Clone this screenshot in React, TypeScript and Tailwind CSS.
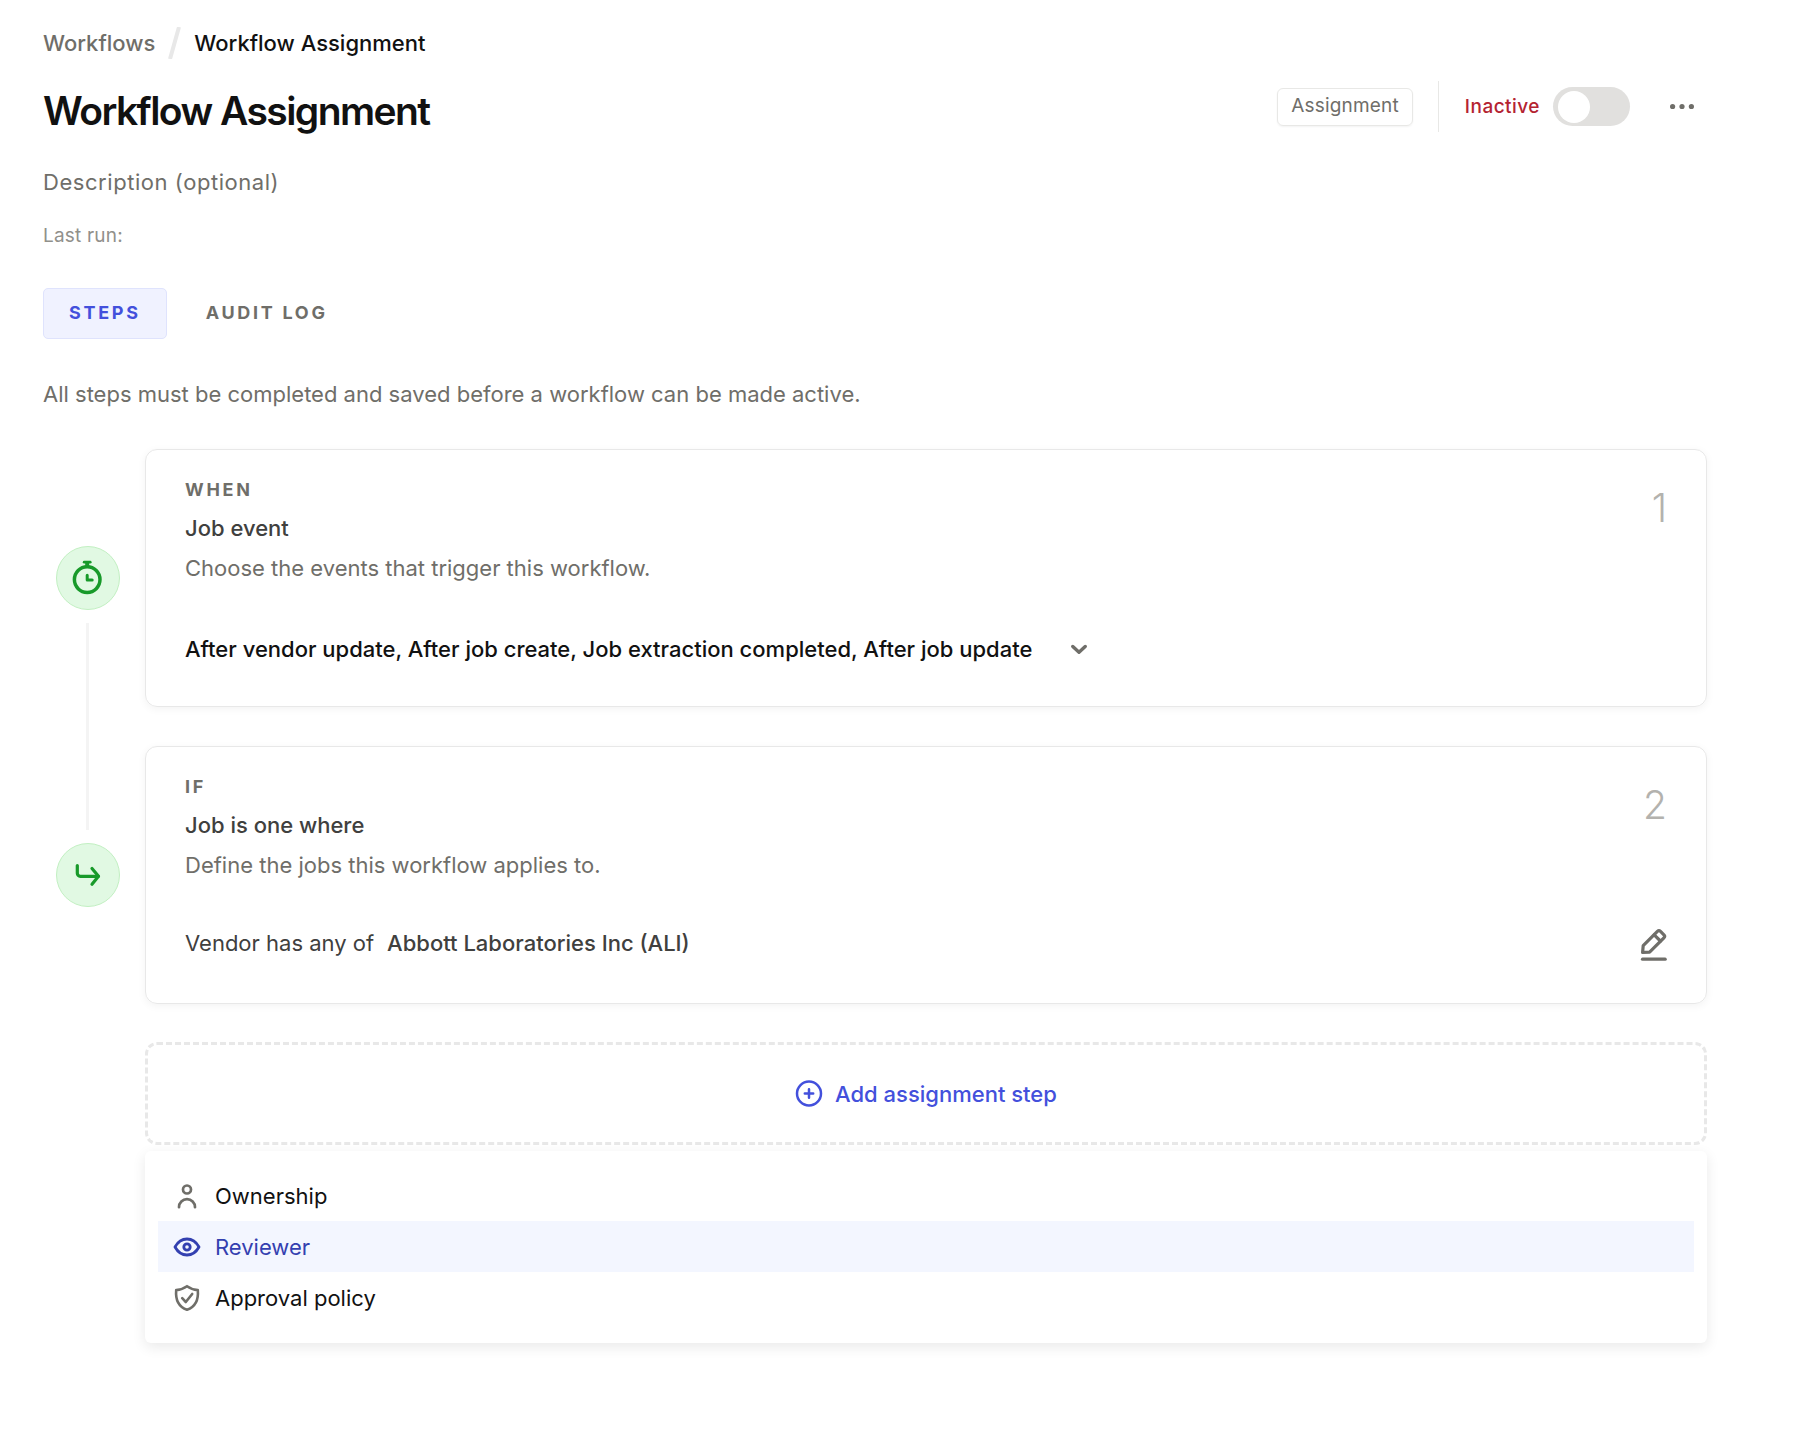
import type { ReactNode } from 'react';

// Icons
function StopwatchIcon() {
  return (
    <svg className="h-9 w-9" viewBox="0 0 36 36" fill="none" stroke="currentColor" strokeLinecap="round" strokeLinejoin="round">
      <circle cx="17.2" cy="19.600" r="12.800" strokeWidth="3.500" />
      <path d="M17.200 15.200v4.900h5" strokeWidth="3" />
      <path d="M14.200 2.200h6" strokeWidth="2.800" />
      <path d="M17.200 3v4" strokeWidth="4" strokeLinecap="butt" />
    </svg>
  );
}

function BranchIcon() {
  return (
    <svg className="h-9 w-9" viewBox="0 0 36 36" fill="none" stroke="currentColor" strokeWidth="3.200" strokeLinecap="round" strokeLinejoin="round">
      <path d="M7.300 8.500v7.800a3 3 0 0 0 3 3h18" />
      <path d="M22 11.500l6.500 7.800l-6.500 7.900" />
    </svg>
  );
}

function ChevronIcon() {
  return (
    <svg className="h-4 w-4" viewBox="0 0 16 16" fill="none" stroke="currentColor" strokeWidth="3.400" strokeLinecap="round" strokeLinejoin="round">
      <path d="M1.800 5.500L8 11.200l6.200-5.700" />
    </svg>
  );
}

function PencilIcon() {
  return (
    <svg className="h-9 w-7" viewBox="3 -1 28 36" fill="none" stroke="currentColor" strokeWidth="3.200" strokeLinecap="round" strokeLinejoin="round">
      <path d="M6.600 26.400l.6-6.800L21.400 5.400a2.200 2.200 0 0 1 3.100 0l3.400 3.400a2.200 2.200 0 0 1 0 3.100L13.600 26.100z" />
      <path d="M18.200 8.800l6.200 6.200" />
      <path d="M6.500 33.200h22.700" />
    </svg>
  );
}

function PlusCircleIcon() {
  return (
    <svg className="h-7 w-7" viewBox="0 0 28 28" fill="none" stroke="currentColor" strokeWidth="2.500" strokeLinecap="round">
      <circle cx="14" cy="13.500" r="12" />
      <path d="M14 9.300v8.400M9.800 13.500h8.400" />
    </svg>
  );
}

function PersonIcon() {
  return (
    <svg className="h-7 w-7" viewBox="0 0 28 28" fill="none" stroke="currentColor" strokeWidth="2.700" strokeLinecap="round">
      <circle cx="14" cy="7.500" r="4" />
      <path d="M6 25.200a8 8 0 0 1 16 0" />
    </svg>
  );
}

function EyeIcon() {
  return (
    <svg className="h-7 w-7" viewBox="0 0 28 28" fill="none" stroke="currentColor" strokeWidth="2.800" strokeLinejoin="round">
      <path d="M2 14c2.200-4 6.500-8 12-8s9.800 4 12 8c-2.200 4-6.500 8-12 8S4.200 18 2 14z" />
      <circle cx="14" cy="14" r="3.200" />
    </svg>
  );
}

function ShieldIcon() {
  return (
    <svg className="h-7 w-7" viewBox="0 0 28 28" fill="none" stroke="currentColor" strokeWidth="2.600" strokeLinecap="round" strokeLinejoin="round">
      <path d="M14 2.200c3 2.200 6.500 3.500 10.800 3.900.8 9.100-2.500 16.700-10.800 19.700C5.700 22.800 2.400 15.200 3.200 6.100 7.500 5.700 11 4.400 14 2.200z" />
      <path d="M9.200 14.200l3.600 3.800 6.400-8" />
    </svg>
  );
}

// Breadcrumb
function Breadcrumb() {
  return (
    <nav aria-label="Breadcrumb" className="flex items-center gap-3 text-[22px] leading-8 font-medium">
      <a href="#workflows" className="text-[#6f6e69]">Workflows</a>
      <svg className="h-8 w-[15px]" viewBox="0 0 15 32" fill="none" stroke="#e8e8e8" strokeWidth="4">
        <path d="M3 32L12 0" />
      </svg>
      <span aria-current="page" className="text-[#111]">Workflow Assignment</span>
    </nav>
  );
}

// Status controls to the right of the title
function HeaderActions() {
  return (
    <div className="flex items-center text-[19px] leading-6">
      <span className="rounded-md border border-[#e8e8e6] px-[13px] pt-[5px] pb-[7px] tracking-[0.01em] text-[#6f6e69] shadow-xs">
        Assignment
      </span>
      <div className="ml-[25px] h-[51px] w-px bg-[#e8e8e6]" />
      <label className="ml-[26px] flex items-center gap-[13px] font-medium tracking-wide text-[#b42331]">
        Inactive
        <input
          type="checkbox"
          role="switch"
          className="flex h-[39px] w-[77px] appearance-none items-center rounded-full bg-[#e1e0de] px-[5px] before:h-8 before:w-8 before:rounded-full before:bg-white"
        />
      </label>
      <button type="button" aria-label="More actions" className="ml-[26px] flex h-[51px] w-[51px] items-center justify-center text-[#6f6e69]">
        <svg className="h-6 w-6" viewBox="0 0 24 24" fill="currentColor">
          <circle cx="2.600" cy="11.500" r="2.600" />
          <circle cx="12" cy="11.500" r="2.600" />
          <circle cx="21.400" cy="11.500" r="2.600" />
        </svg>
      </button>
    </div>
  );
}

function Tabs() {
  return (
    <div role="tablist" className="mt-10 flex gap-[13px] text-lg leading-6 font-bold tracking-[0.15em]">
      <button type="button" role="tab" aria-selected="true" className="h-[51px] rounded-[5px] border border-[#dfe3fd] bg-[#f0f2ff] px-[25px] pb-[2px] text-[#4350dc]">
        STEPS
      </button>
      <button type="button" role="tab" aria-selected="false" className="h-[51px] px-[26px] pb-[2px] text-[#6f6e69]">
        AUDIT LOG
      </button>
    </div>
  );
}

// Timeline marker next to a card
function StepMarker({ children }: { children: ReactNode }) {
  return (
    <div className="flex h-16 w-16 items-center justify-center rounded-full border border-[#c2f0c2] bg-[#e1f9e3] text-[#189a2a]">
      {children}
    </div>
  );
}

type StepCardProps = {
  kind: string;
  title: string;
  description: string;
  number: number;
  children: ReactNode;
};

function StepCard({ kind, title, description, number, children }: StepCardProps) {
  return (
    <section className="flex h-[258px] flex-col rounded-xl border border-[#e8e8e8] px-[39px] pt-7 shadow-[0_2px_8px_rgba(0,0,0,0.05)]">
      <div className="flex justify-between">
        <div>
          <p className="text-lg leading-6 font-bold tracking-[0.15em] text-[#6f6e69]">{kind}</p>
          <h2 className="mt-[10px] text-[22px] leading-8 font-medium text-[#40403e]">{title}</h2>
          <p className="mt-2 text-[22px] leading-8 text-[#6f6e69]">{description}</p>
        </div>
        <span className="mt-[6px] text-[39px] leading-12 font-light text-[#b3b2ae]">{number}</span>
      </div>
      {children}
    </section>
  );
}

const menuItems = [
  { label: 'Ownership', icon: <PersonIcon />, active: false },
  { label: 'Reviewer', icon: <EyeIcon />, active: true },
  { label: 'Approval policy', icon: <ShieldIcon />, active: false },
];

function StepMenu() {
  return (
    <div role="menu" className="mt-[6px] rounded-md px-[13px] pt-[19px] pb-5 shadow-[0_4px_14px_rgba(0,0,0,0.09)]">
      {menuItems.map((item) => (
        <button
          key={item.label}
          type="button"
          role="menuitem"
          className={`flex h-[51px] w-full items-center gap-[14px] px-[15px] text-[22px] leading-8 ${
            item.active ? 'bg-[#f3f6ff] text-[#3340b0]' : 'text-[#111]'
          }`}
        >
          <span className={item.active ? 'text-[#3340b0]' : 'text-[#6f6e69]'}>{item.icon}</span>
          {item.label}
        </button>
      ))}
    </div>
  );
}

export default function App() {
  return (
    <main className="bg-white pt-[27px] pr-[113px] pb-24 pl-[43px] font-['Inter',sans-serif]">
      <Breadcrumb />
      <header className="mt-[22px] flex items-start justify-between">
        <h1 className="mt-[6px] text-[39px] leading-12 font-semibold tracking-[-0.04em] text-[#111]">Workflow Assignment</h1>
        <HeaderActions />
      </header>
      <input
        type="text"
        aria-label="Description"
        placeholder="Description (optional)"
        className="mt-[31px] block h-8 w-full text-[22px] tracking-wide outline-none placeholder:text-[#6f6e69]"
      />
      <p className="mt-[26px] text-[19px] leading-6 tracking-[0.01em] text-[#91908b]">Last run:</p>
      <Tabs />
      <p className="mt-[39px] text-[22px] leading-8 text-[#6f6e69]">
        All steps must be completed and saved before a workflow can be made active.
      </p>

      <div className="mt-[39px] flex">
        <div className="flex w-[102px] shrink-0 flex-col items-start py-[97px] pl-[13px]">
          <StepMarker>
            <StopwatchIcon />
          </StepMarker>
          <div className="my-[13px] ml-[30px] w-[3px] flex-1 bg-[#f4f4f4]" />
          <StepMarker>
            <BranchIcon />
          </StepMarker>
        </div>
        <div className="flex min-w-0 flex-1 flex-col gap-[39px]">
          <StepCard kind="WHEN" title="Job event" description="Choose the events that trigger this workflow." number={1}>
            <div className="mt-[49px] flex items-center gap-6 text-[#6f6e69]">
              <select
                aria-label="Trigger events"
                className="w-[862px] appearance-none text-[22px] leading-8 font-medium text-[#111] outline-none"
              >
                <option>After vendor update, After job create, Job extraction completed, After job update</option>
              </select>
              <ChevronIcon />
            </div>
          </StepCard>
          <StepCard kind="IF" title="Job is one where" description="Define the jobs this workflow applies to." number={2}>
            <div className="mt-11 flex items-center justify-between text-[22px] leading-8 text-[#40403e]">
              <p className="flex gap-[13px]">
                Vendor has any of <strong className="font-medium">Abbott Laboratories Inc (ALI)</strong>
              </p>
              <button type="button" aria-label="Edit condition" className="text-[#6f6e69]">
                <PencilIcon />
              </button>
            </div>
          </StepCard>
        </div>
      </div>

      <div className="mt-[38px] ml-[102px]">
        <button
          type="button"
          aria-haspopup="menu"
          className="flex h-[103px] w-full items-center justify-center gap-3 rounded-xl border-3 border-dashed border-[#e8e8e8] text-[22px] leading-8 font-medium text-[#4350dc]"
        >
          <PlusCircleIcon />
          Add assignment step
        </button>
        <StepMenu />
      </div>
    </main>
  );
}
